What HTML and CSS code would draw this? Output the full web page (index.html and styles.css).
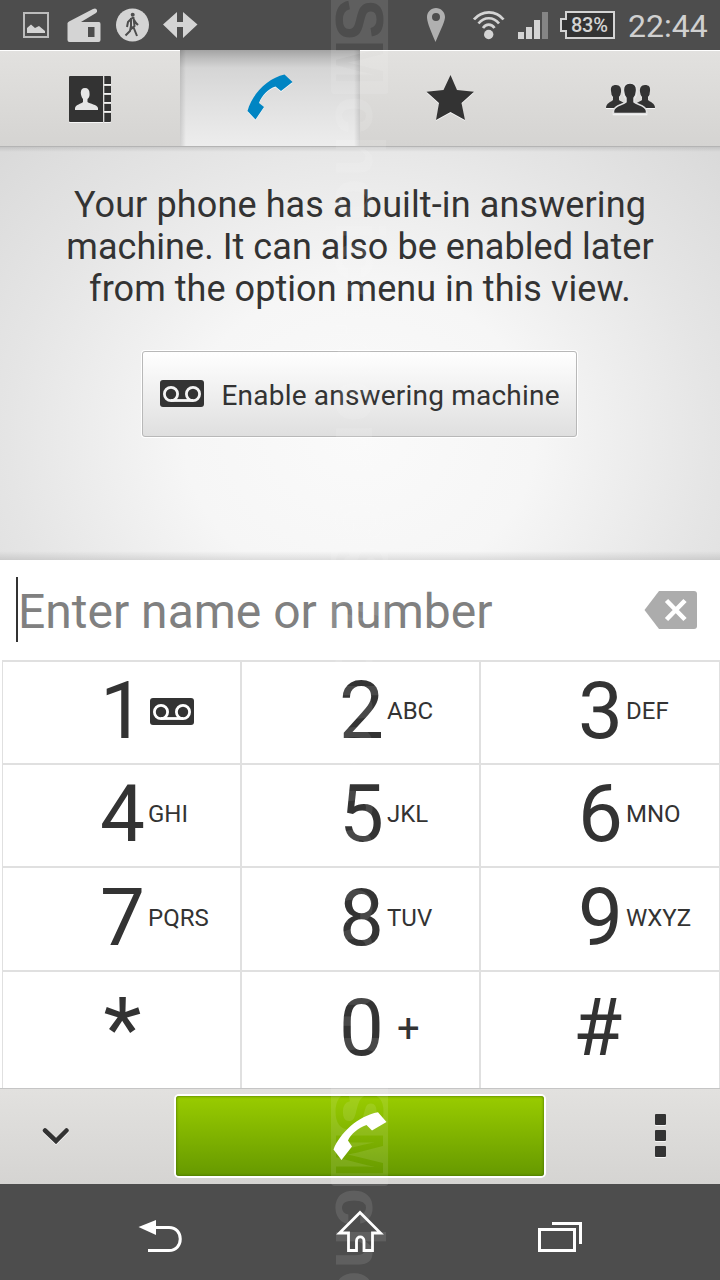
FILE: index.html
```html
<!DOCTYPE html>
<html lang="en">
<head>
<meta charset="utf-8">
<title>Phone</title>
<link rel="stylesheet" href="styles.css">
</head>
<body>
<main class="phone">
  <header class="status">
    <svg class="s-image" width="26" height="50" viewBox="23 0 26 50"><path d="M24 13H48V37H24Z" fill="none" stroke="#bcbcbc" stroke-width="2"/><path d="M27 33V28L31 24.500L35 28L39 26L45 31V33Z" fill="#d4d4d4"/></svg>
    <svg class="s-radio" width="34" height="50" viewBox="67 0 34 50"><path fill="#d4d4d4" fill-rule="evenodd" d="M67.500 23Q68 22 69 21.500L93 9Q96 7.500 97 10Q97.500 12 96 13L81 22H99Q100.500 22 100.500 24V40Q100.500 42 98.500 42H69.500Q67.500 42 67.500 40ZM88 27H94.500V37H88Z"/></svg>
    <svg class="s-walk" width="34" height="50" viewBox="116 0 34 50"><circle cx="132.500" cy="25" r="16.500" fill="#d4d4d4"/><circle cx="132.700" cy="14.800" r="2" fill="#4d4d4d"/><path d="M131.500 18L133.500 18L134.500 26L131 29V18M131.500 18.500L128 22L127 27M133.500 19L136 23L138 25M131 26L130 31L125.500 35.500M133 26L135 31L137 36" fill="none" stroke="#4d4d4d" stroke-width="2"/></svg>
    <svg class="s-arrows" width="35" height="50" viewBox="163 0 35 50"><path d="M163 24.500L177 12V22H183V12L197.500 24.500L183 38V27H177V38Z" fill="#d4d4d4"/></svg>
    <svg class="s-pin" width="18" height="50" viewBox="427 0 18 50"><path fill="#b0b0b0" fill-rule="evenodd" d="M436 8C441 8 445 12 445 17C445 21 442 27 435.500 42C429 27 427 21 427 17C427 12 431 8 436 8ZM436 13A4 4 0 1 0 436 21A4 4 0 1 0 436 13Z"/></svg>
    <svg class="s-wifi" width="32" height="50" viewBox="473 0 32 50"><g fill="none" stroke="#d4d4d4" stroke-width="2.700"><path d="M474 19.500C482 10 496 10 503.500 19.500"/><path d="M478.500 23.500C484 16.500 493.500 16.500 499 23.500"/><path d="M483 28C486 23.500 491.500 23.500 494.500 28"/></g><circle cx="488.700" cy="34.500" r="4.700" fill="#d4d4d4"/></svg>
    <svg class="s-signal" width="30" height="50" viewBox="518 0 30 50"><path fill="#d4d4d4" d="M518 32h6v7h-6zM526 27h6v12h-6zM534 20h6v19h-6z"/><path fill="#858585" d="M542 12h6v27h-6z"/></svg>
    <div class="battery"><svg width="55" height="28" viewBox="560 11 55 28"><path d="M566 12H614V38H566V31H561V19H566Z" fill="#333" stroke="#d4d4d4" stroke-width="2"/></svg><span>83%</span></div>
    <span class="clock">22:44</span>
  </header>

  <nav class="tabs">
    <div class="tab"><svg class="lift" width="44" height="48" viewBox="68 74 44 48"><path fill="#333" d="M70 75H103V121H70Q69 121 69 120V76Q69 75 70 75ZM104.300 75H110Q111 75 111 76V83H104.300ZM104.300 85H111V92H104.300ZM104.300 94H111V101H104.300ZM104.300 103H111V110H104.300ZM104.300 112H111V120Q111 121 110 121H104.300Z"/><path fill="#e6e6e6" d="M85 87C88 87 89.500 89 89.500 92Q90 96 87.500 98V101C90 103 97 103.500 98 107V109H75V107C76 103.500 81 103 83 101V98C80.500 95 79 87 85 87Z"/></svg></div>
    <div class="tab active"><svg class="lift" width="46" height="46" viewBox="247 74 46 46"><path fill="#0085c3" d="M247.500 111C252 94 268 78 284.500 74.500L292.500 82L281 91L275.500 86.500C268 89 262 95 259 103L264 107L255.500 119.500Z"/></svg></div>
    <div class="tab"><svg class="lift star" width="48" height="46" viewBox="426 75 48 46"><path fill="#333" d="M450.500 75L457 90L474 91.700L461.500 103L465 120L450.500 112L436 120L439 103L426.500 91.700L443.500 90Z"/></svg></div>
    <div class="tab"><svg class="lift" width="50" height="32" viewBox="605 84 50 32"><g fill="#333"><path d="M616 86C620 86 621.500 89 621 93Q620.800 96 619 98V101C621 103 626.500 104 627 107.500V109H606C606 104 611 103 613 101V98Q611 96 611 92C610.500 88 612 86 616 86Z"/><path d="M645 86C641 86 639.500 89 640 93Q640.200 96 642 98V101C640 103 634 104 634 107.500V109H655C655 104 650 103 648 101V98Q650 96 650 92C650.500 88 649 86 645 86Z"/><path stroke="#e2e2e2" stroke-width="1.500" d="M630 84C635 84 637 87.500 636.500 92Q636.300 96.500 634 99V103C637 106 646 106 646.500 112V114.500H613.500V112C614 106 623 106 626 103V99Q623.800 96.500 623.500 92C623 87.500 625 84 630 84Z"/></g></svg></div>
  </nav>

  <section class="info">
    <p><span class="l1">Your phone has a built-in answering</span><br><span class="l2">machine. It can also be enabled later</span><br><span class="l2">from the option menu in this view.</span></p>
    <div class="enable">
      <svg width="44" height="27" viewBox="0 0 44 27"><rect width="44" height="27" rx="3" fill="#333"/><g fill="none" stroke="#f4f4f4" stroke-width="2.800"><circle cx="11" cy="14" r="6.600"/><circle cx="33" cy="14" r="6.600"/><path d="M11 20.500H33"/></g></svg>
      <span>Enable answering machine</span>
    </div>
  </section>

  <section class="entry">
    <i class="caret"></i><span class="hint">Enter name or number</span>
    <svg class="erase" width="53" height="38" viewBox="0 0 53 38"><path fill="#acacac" d="M0.500 19L15 0H50Q53 0 53 3V35Q53 38 50 38H15Z"/><path d="M22.500 9.500L41 28.500M41 9.500L22.500 28.500" stroke="#fff" stroke-width="4.600"/></svg>
  </section>

  <section class="pad">
    <div class="key"><b>1</b><svg class="vm" width="44" height="27" viewBox="0 0 44 27"><rect width="44" height="27" rx="3" fill="#333"/><g fill="none" stroke="#fff" stroke-width="2.800"><circle cx="11" cy="14" r="6.600"/><circle cx="33" cy="14" r="6.600"/><path d="M11 20.500H33"/></g></svg></div>
    <div class="key"><b>2</b><span>ABC</span></div>
    <div class="key"><b>3</b><span>DEF</span></div>
    <div class="key"><b>4</b><span>GHI</span></div>
    <div class="key"><b>5</b><span>JKL</span></div>
    <div class="key"><b>6</b><span>MNO</span></div>
    <div class="key low"><b>7</b><span>PQRS</span></div>
    <div class="key low"><b>8</b><span>TUV</span></div>
    <div class="key low"><b>9</b><span>WXYZ</span></div>
    <div class="key"><b class="asterisk">*</b></div>
    <div class="key"><b>0</b><span class="plus">+</span></div>
    <div class="key hash"><b>#</b></div>
  </section>

  <section class="actions">
    <div class="side left"><svg class="lift" width="28" height="18" viewBox="42 1127 28 18"><path d="M45 1130.500L56 1141L66.500 1130.500" fill="none" stroke="#333" stroke-width="4.500" stroke-linecap="round"/></svg></div>
    <div class="call"><svg width="54" height="48" viewBox="333 1113 54 48"><path fill="#fff" d="M333.500 1150.500C340 1134 358 1117 378 1113.300L386.500 1123L372 1131.500L366.500 1126C358 1129 351 1135 348 1141.500L352 1147.500L341.500 1161Z"/></svg></div>
    <div class="side right"><svg class="lift" width="12" height="44" viewBox="0 0 12 44"><path fill="#333" d="M1 0h9v0q1 0 1 1v9q0 1-1 1H1q-1 0-1-1V1q0-1 1-1zM1 16h9q1 0 1 1v9q0 1-1 1H1q-1 0-1-1v-9q0-1 1-1zM1 32h9q1 0 1 1v9q0 1-1 1H1q-1 0-1-1v-9q0-1 1-1z"/></svg></div>
  </section>

  <footer class="sysnav">
    <svg class="n-back" width="46" height="36" viewBox="138 1218 46 36"><path fill="#fff" d="M138.500 1227L156 1220V1235Z"/><path d="M155 1227.500H169C184 1227.500 184 1250.500 169 1250.500H148" fill="none" stroke="#fff" stroke-width="3"/></svg>
    <svg class="n-home" width="48" height="44" viewBox="336 1210 48 44"><path d="M348.500 1233H339.500L360 1212.500L380.500 1233H372.500V1250.500H364V1241C364 1235.500 356.500 1235.500 356.500 1241V1250.500H348.500Z" fill="none" stroke="#fff" stroke-width="2.800"/></svg>
    <svg class="n-recent" width="46" height="32" viewBox="537 1221 46 32"><path d="M539.500 1229.500H574.500V1250.500H539.500ZM552 1223.500H580.500V1244" fill="none" stroke="#fff" stroke-width="3"/></svg>
  </footer>

  <svg class="watermark" width="720" height="1280" viewBox="0 0 720 1280">
    <defs>
      <mask id="cut" maskUnits="userSpaceOnUse" x="0" y="0" width="160" height="60">
        <rect width="160" height="60" fill="#fff"/>
        <text class="wm" x="9" y="53" textLength="41" lengthAdjust="spacingAndGlyphs">G</text>
        <text class="wm" x="53" y="53" textLength="41" lengthAdjust="spacingAndGlyphs">S</text>
        <text class="wm" x="94" y="53" textLength="45" lengthAdjust="spacingAndGlyphs">M</text>
      </mask>
      <g id="mark">
        <rect width="148" height="57.500" rx="4" mask="url(#cut)"/>
        <text class="wm" x="150" y="53" textLength="388" lengthAdjust="spacing">choice.com</text>
      </g>
    </defs>
    <use href="#mark" transform="translate(388.500 -54) rotate(90)"/>
    <use href="#mark" transform="translate(388.500 492) rotate(90)"/>
    <use href="#mark" transform="translate(388.500 1038) rotate(90)"/>
  </svg>
</main>
</body>
</html>
```
FILE: styles.css
```css
* { box-sizing: border-box; }
body { margin: 0; font-family: Roboto, "Noto Sans", sans-serif; color: #333; }
svg { display: block; flex: none; }
.phone { position: relative; width: 720px; height: 1280px; overflow: hidden; display: flex; flex-direction: column; background: #fff; }
.phone > * { flex: none; }

.status { height: 50px; background: #4d4d4d; display: flex; align-items: center; padding-left: 23px; }
.s-radio { margin-left: 18px; }
.s-walk { margin-left: 15px; }
.s-arrows { margin-left: 13px; }
.s-pin { margin-left: 229px; }
.s-wifi { margin-left: 28px; }
.s-signal { margin-left: 13px; }
.battery { margin-left: 12px; width: 55px; display: grid; }
.battery > * { grid-area: 1 / 1; }
.battery span { padding-left: 11px; font-size: 20px; font-weight: 500; letter-spacing: -.3px; line-height: 28px; color: #d4d4d4; }
.clock { margin-left: 13px; font-size: 32px; line-height: 50px; padding-top: 2px; color: #d0d0d0; white-space: nowrap; }

.tabs { height: 97px; display: grid; grid-template-columns: repeat(4, 180px); border-bottom: 1px solid #b4b4b4; }
.tab { display: flex; align-items: center; justify-content: center; background: linear-gradient(#e2e1df, #d5d4d2); border-top: 1px solid #fff; }
.tab.active { border-top: 0; padding-bottom: 2px; background: linear-gradient(90deg, rgba(0,0,0,.12), transparent 6px, transparent 174px, rgba(0,0,0,.12)), linear-gradient(#a3a3a3, #bcbcbc 8px, #d5d5d5 18px, #dedede 45px, #ededed); }
.lift { filter: drop-shadow(0 1px 0 #f6f6f6); }
.star { margin-bottom: 2px; }

.info { height: 413px; padding-top: 37px; background: linear-gradient(rgba(0,0,0,.1), transparent 5px, transparent 404px, rgba(0,0,0,.1)), radial-gradient(ellipse 440px 380px at 50% 70%, #fafafa, #f6f6f6 40%, #e5e5e5 80%, #dadada 110%); display: flex; flex-direction: column; align-items: center; }
.info p { margin: 0; text-align: center; font-size: 36px; line-height: 42px; white-space: nowrap; }
.l1 { letter-spacing: .12px; }
.l2 { letter-spacing: .05px; }
.enable { margin: 41px 2px 0 0; width: 435px; height: 86px; border: 1px solid #b8b8b8; border-radius: 3px; box-shadow: 0 0 0 1px #fff; background: linear-gradient(#fff, #dfdfdf); display: flex; align-items: center; padding-left: 17px; font-size: 28px; letter-spacing: .2px; white-space: nowrap; }
.enable svg { margin-bottom: 2px; }
.enable span { margin-left: 18px; padding-top: 3px; }

.entry { height: 100px; background: #fff; display: flex; align-items: center; padding-left: 16px; }
.caret { width: 2px; height: 65px; margin-bottom: 2px; background: #333; }
.hint { width: 626px; font-size: 48px; color: #808080; padding-top: 2px; white-space: nowrap; }

.pad { height: 428px; margin-left: 2px; border-left: 1px solid #e0e0e0; display: grid; grid-template-columns: repeat(3, 239px); grid-template-rows: 103px 103px 104px 118px; }
.key { border-top: 2px solid #e0e0e0; border-right: 2px solid #e0e0e0; display: flex; align-items: center; padding: 0 0 4px 97px; white-space: nowrap; }
.key:nth-child(3n) { border-right-width: 1px; }
.key.low { padding-bottom: 2px; }
.key.hash { padding-left: 94px; }
.key b { width: 45px; font-size: 80px; font-weight: 400; line-height: 90px; text-align: center; display: flex; justify-content: center; }
.key .asterisk { font-size: 88px; padding-top: 2px; }
.key span { margin-left: 3px; font-size: 24px; }
.key .plus { margin-left: 13px; font-size: 40px; }
.vm { margin: 2px 0 0 5px; }

.actions { height: 96px; border-top: 1px solid #c5c5c5; background: linear-gradient(#e2e1df, #d5d4d2); display: grid; grid-template-columns: 176px 368px 176px; align-items: center; padding-bottom: 1px; }
.left { padding-left: 42px; }
.right { padding-left: 111px; }
.call { height: 80px; border-radius: 3px; box-shadow: 0 0 0 2px #fff, inset 0 0 3px #3c6400; background: linear-gradient(#9c0, #690); display: flex; align-items: center; justify-content: center; }

.sysnav { height: 96px; background: #4d4d4d; display: flex; align-items: flex-start; padding: 26px 0 0 138px; }
.n-back { margin-top: 8px; }
.n-home { margin-left: 152px; }
.n-recent { margin-left: 153px; margin-top: 11px; }

.watermark { position: absolute; left: 0; top: 0; fill: #fff; opacity: .1; pointer-events: none; }
.wm { font-family: "Liberation Sans", Arial, sans-serif; font-size: 68px; font-weight: 700; }
mask .wm { fill: #000; }
```
